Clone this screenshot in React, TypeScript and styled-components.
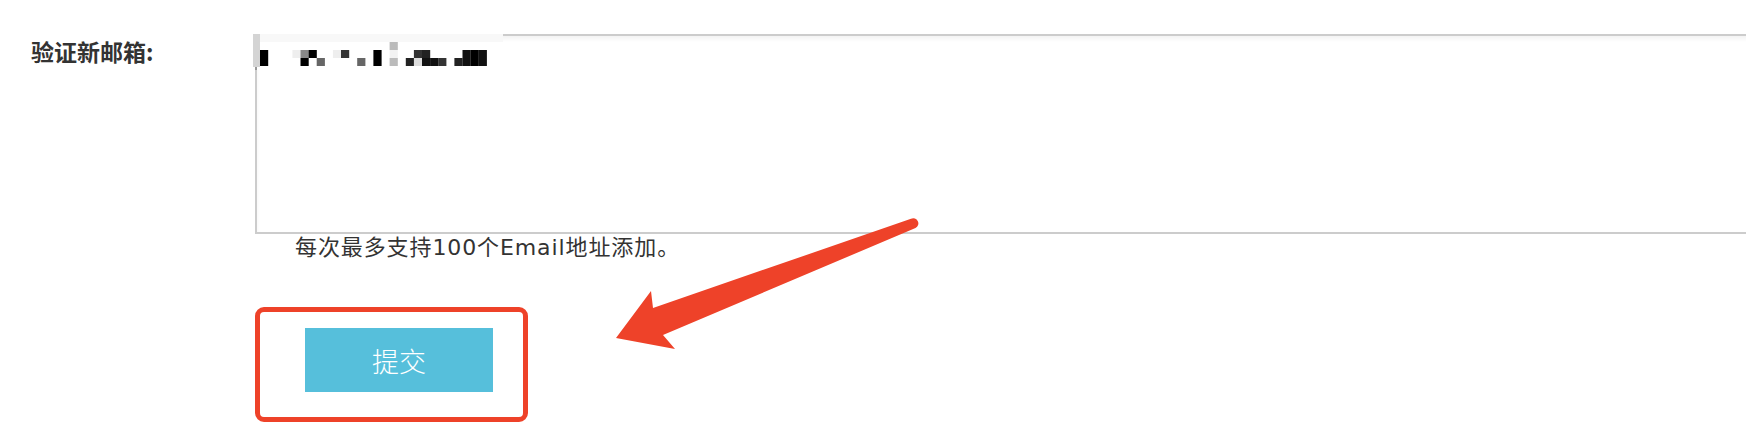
import React from "react";
import styled, { createGlobalStyle } from "styled-components";

const GlobalStyle = createGlobalStyle`
  html, body {
    margin: 0;
    padding: 0;
    background: #ffffff;
    overflow: hidden;
  }
  body {
    font-family: "Noto Sans CJK SC", "Noto Sans", sans-serif;
    color: #333333;
  }
`;

const Page = styled.div`
  position: relative;
  width: 1746px;
  height: 430px;
  overflow: hidden;
  background: #ffffff;
`;

const FieldRow = styled.div`
  display: flex;
  align-items: flex-start;
  padding: 34px 0 0 31px;
`;

const Label = styled.div`
  flex: none;
  width: 224px;
  padding-top: 6px;
  font-family: "Noto Sans CJK SC", sans-serif;
  font-size: 23px;
  font-weight: 700;
  line-height: 1;
  color: #333333;
`;

const FieldBody = styled.div`
  flex: 1;
  display: flex;
  flex-direction: column;
  align-items: flex-start;
`;

const TextareaWrap = styled.div`
  position: relative;
  width: 1600px;
  height: 200px;
`;

const Textarea = styled.textarea`
  display: block;
  box-sizing: border-box;
  width: 100%;
  height: 100%;
  margin: 0;
  padding: 8px;
  border: 2px solid #cccccc;
  border-radius: 0;
  box-shadow: inset 0 3px 4px rgba(0, 0, 0, 0.05);
  background: #ffffff;
  resize: none;
  outline: none;
  font-family: "Liberation Sans", sans-serif;
  font-size: 20px;
`;

const Mosaic = styled.svg`
  position: absolute;
  left: -2px;
  top: 0;
  width: 250px;
  height: 36px;
`;

const Hint = styled.div`
  margin: 1px 0 0 40px;
  font-family: "DejaVu Sans", "Noto Sans CJK SC", sans-serif;
  font-size: 22px;
  line-height: 26px;
  letter-spacing: 0.9px;
  color: #333333;
`;

const Highlight = styled.div`
  margin-top: 46px;
  padding: 16px 30px 25px 45px;
  border: 5px solid #ee4229;
  border-radius: 9px;
`;

const SubmitButton = styled.button`
  display: block;
  width: 188px;
  height: 64px;
  margin: 0;
  padding: 0;
  border: none;
  background: #56bfdb;
  color: #ffffff;
  font-family: "Noto Sans CJK SC", sans-serif;
  font-size: 27px;
  font-weight: 300;
  cursor: pointer;
`;

const ArrowSvg = styled.svg`
  position: absolute;
  left: 600px;
  top: 200px;
  width: 330px;
  height: 160px;
`;

type Block = { c: number; r: number; f: string };

const blocks: Block[] = [
  { c: 0, r: 1, f: "#000" },
  { c: 0, r: 2, f: "#000" },
  { c: 4, r: 1, f: "#eeeeee" },
  { c: 5, r: 1, f: "#888" },
  { c: 5, r: 2, f: "#000" },
  { c: 6, r: 1, f: "#000" },
  { c: 7, r: 2, f: "#666" },
  { c: 9, r: 1, f: "#eeeeee" },
  { c: 10, r: 1, f: "#333" },
  { c: 12, r: 2, f: "#666" },
  { c: 14, r: 1, f: "#000" },
  { c: 14, r: 2, f: "#000" },
  { c: 16, r: 0, f: "#bbbbbb" },
  { c: 16, r: 1, f: "#f2f2f2" },
  { c: 16, r: 2, f: "#bbbbbb" },
  { c: 18, r: 2, f: "#222" },
  { c: 19, r: 1, f: "#333" },
  { c: 19, r: 2, f: "#dddddd" },
  { c: 20, r: 1, f: "#222" },
  { c: 20, r: 2, f: "#111" },
  { c: 21, r: 2, f: "#111" },
  { c: 22, r: 2, f: "#333" },
  { c: 24, r: 2, f: "#222" },
  { c: 25, r: 1, f: "#111" },
  { c: 25, r: 2, f: "#111" },
  { c: 26, r: 1, f: "#000" },
  { c: 26, r: 2, f: "#000" },
  { c: 27, r: 1, f: "#111" },
  { c: 27, r: 2, f: "#111" },
];

export default function App() {
  return (
    <>
      <GlobalStyle />
      <Page>
        <FieldRow>
          <Label>验证新邮箱:</Label>
          <FieldBody>
            <TextareaWrap>
              <Textarea aria-label="验证新邮箱" />
              <Mosaic viewBox="0 0 250 36" aria-hidden="true">
                <rect x="0" y="0" width="250" height="36" fill="#ffffff" />
                <rect x="7" y="0" width="243" height="8" fill="#f8f8f8" />
                <rect x="0" y="0" width="7" height="33" fill="#d4d4d4" />
                <rect x="2" y="33" width="2" height="3" fill="#999" />
                {blocks.map((b, i) => (
                  <rect
                    key={i}
                    x={7 + b.c * 8.1}
                    y={8 + b.r * 8}
                    width={8.2}
                    height={8}
                    fill={b.f}
                  />
                ))}
              </Mosaic>
            </TextareaWrap>
            <Hint>每次最多支持100个Email地址添加。</Hint>
            <Highlight>
              <SubmitButton type="button">提交</SubmitButton>
            </Highlight>
          </FieldBody>
        </FieldRow>
        <ArrowSvg viewBox="0 0 330 160" aria-hidden="true">
          <path
            d="M 311 18.8 L 53 108 L 51 91 L 16 138 L 75 149 L 63 135 L 315.5 28 A 4.9 4.9 0 0 0 311 18.8 Z"
            fill="#ee4229"
          />
        </ArrowSvg>
      </Page>
    </>
  );
}
